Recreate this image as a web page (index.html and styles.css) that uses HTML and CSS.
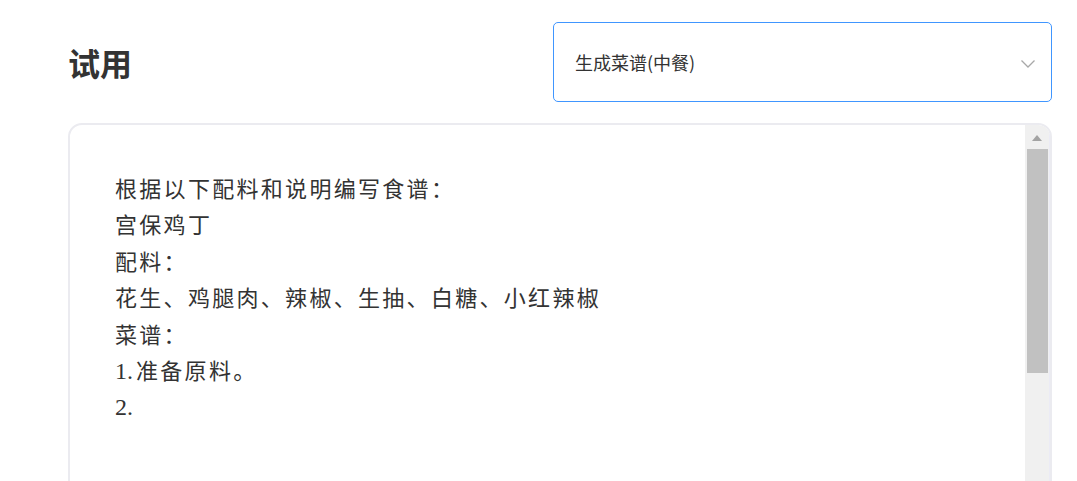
FILE: index.html
```html
<!DOCTYPE html>
<html lang="zh-CN">
<head>
<meta charset="utf-8">
<link rel="stylesheet" href="styles.css">
</head>
<body>
<div class="page">
  <div class="header">
    <h1 class="title">试用</h1>
    <div class="select">
      <span class="select-text">生成菜谱(中餐)</span>
      <svg class="chevron" width="16" height="10" viewBox="0 0 16 10"><path d="M1.5 1.5 L8 8 L14.5 1.5" fill="none" stroke="#a8a8a8" stroke-width="1.3"/></svg>
    </div>
  </div>
  <div class="editor">
    <div class="content">根据以下配料和说明编写食谱：<br>宫保鸡丁<br>配料：<br>花生、鸡腿肉、辣椒、生抽、白糖、小红辣椒<br>菜谱：<br><span class="num">1.</span>准备原料。<br><span class="num">2.</span></div>
    <div class="scrollbar">
      <div class="arrow"></div>
      <div class="thumb"></div>
    </div>
  </div>
</div>
</body>
</html>
```
FILE: styles.css
```css
html, body {
  margin: 0;
  padding: 0;
  background: #ffffff;
  overflow: hidden;
}
.page {
  width: 984px;
  margin-left: 68px;
  font-family: "Noto Sans CJK SC", "Noto Sans", sans-serif;
}
.header {
  display: flex;
  justify-content: space-between;
  align-items: center;
  padding-top: 22px;
}
.title {
  margin: 0;
  font-size: 32px;
  font-weight: 700;
  color: #333333;
  line-height: 40px;
}
.select {
  box-sizing: border-box;
  width: 499px;
  height: 80px;
  border: 1px solid #4096ff;
  border-radius: 5px;
  display: flex;
  align-items: center;
  justify-content: space-between;
  padding: 0 15px 0 21px;
}
.select-text {
  font-size: 18px;
  color: #333333;
}
.chevron {
  display: block;
  margin-top: 3px;
}
.editor {
  box-sizing: border-box;
  margin-top: 21px;
  height: 420px;
  border: 2px solid #ebebf0;
  border-radius: 14px;
  display: flex;
  overflow: hidden;
}
.content {
  flex: 1;
  padding: 44px 0 0 45px;
  font-family: "Noto Sans CJK SC", serif;
  font-size: 22px;
  line-height: 36.4px;
  letter-spacing: 2.3px;
  color: #333333;
}
.num {
  letter-spacing: 0;
  font-family: "Liberation Serif", serif;
  font-size: 24px;
  line-height: 0;
  margin-right: 3px;
}
.scrollbar {
  width: 24px;
  background: #f0f0f0;
  display: flex;
  flex-direction: column;
  align-items: center;
  border-right: 1px solid #ebebf5;
}
.arrow {
  margin-top: 10px;
  width: 0;
  height: 0;
  border-left: 5px solid transparent;
  border-right: 5px solid transparent;
  border-bottom: 6px solid #a3a3a3;
}
.thumb {
  margin-top: 8px;
  width: 21px;
  height: 224px;
  background: #c1c1c1;
}
```
